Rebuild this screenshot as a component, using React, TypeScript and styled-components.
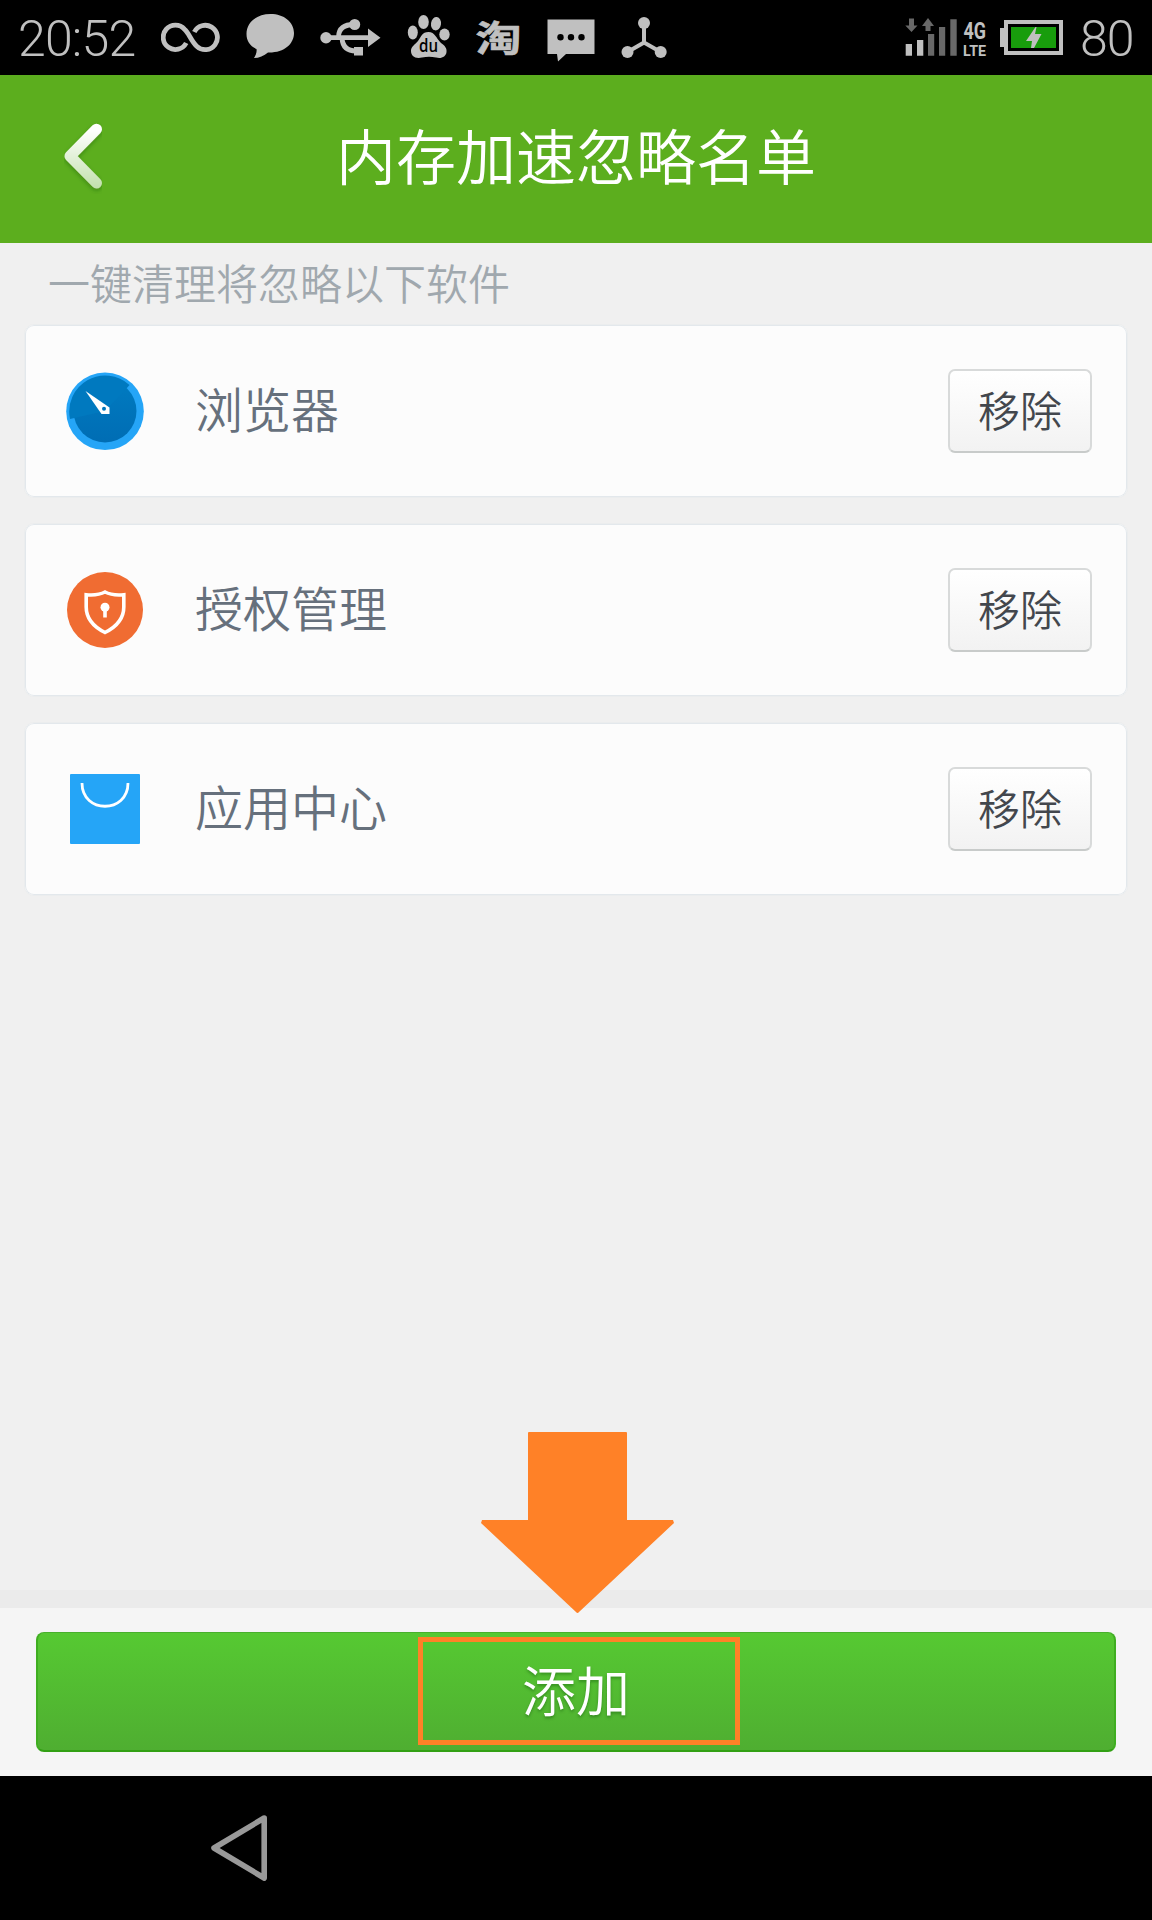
import React from 'react';
import styled, { createGlobalStyle } from 'styled-components';

const GlobalStyle = createGlobalStyle`
  * { box-sizing: border-box; }
  body { margin: 0; background: #f0f0f0; }
`;

const cjk = `Roboto, 'Noto Sans CJK SC', sans-serif`;

const Screen = styled.div`
  width: 1152px;
  height: 1920px;
  display: flex;
  flex-direction: column;
  background: #f0f0f0;
  font-family: ${cjk};
  font-weight: 350;
  overflow: hidden;
`;

const StatusBar = styled.div`
  height: 75px;
  flex: none;
  display: flex;
  background: #000;
  color: #c0c0c0;
  font-weight: 300;
`;

const Clock = styled.div`
  width: 161px;
  padding-left: 18px;
  font-size: 50px;
  letter-spacing: -0.8px;
  line-height: 79px;
  white-space: nowrap;
`;

const Charge = styled.div`
  margin-left: 17px;
  font-size: 50px;
  letter-spacing: -1px;
  line-height: 79px;
`;

const StatusIcon = styled.svg<{ $gap?: number }>`
  flex: none;
  display: block;
  height: 75px;
  margin-left: ${(p) => p.$gap ?? 0}px;
  fill: #c0c0c0;
`;

const Header = styled.header`
  height: 168px;
  flex: none;
  display: grid;
  grid-template-columns: 160px 1fr 160px;
  align-items: center;
  background: #5cae1e;
`;

const BackButton = styled.button`
  height: 168px;
  padding: 0 0 0 56px;
  border: 0;
  background: none;
  display: flex;
  align-items: center;
`;

const Title = styled.h1`
  margin: 0;
  padding-top: 2px;
  text-align: center;
  color: #fff;
  font-size: 60px;
  font-weight: 350;
  line-height: 166px;
`;

const Content = styled.main`
  flex: 1;
  padding: 0 24px;
`;

const Hint = styled.p`
  margin: 0;
  height: 81px;
  padding-left: 24px;
  color: #a0a8ae;
  font-size: 42px;
  line-height: 86px;
`;

const List = styled.div`
  display: flex;
  flex-direction: column;
  gap: 25px;
`;

const Card = styled.div`
  height: 174px;
  display: flex;
  align-items: center;
  padding: 0 35px 0 40px;
  border: 1px solid #ebedee;
  border-radius: 10px;
  background: #fcfcfc;
  box-shadow: inset 0 0 0 1px #e3e8ec;
`;

const AppIcon = styled.svg`
  width: 80px;
  height: 80px;
  flex: none;
`;

const AppName = styled.span`
  flex: 1;
  margin-left: 50px;
  padding-top: 1px;
  color: #66707c;
  font-size: 48px;
  line-height: 72px;
`;

const RemoveButton = styled.button`
  width: 144px;
  height: 84px;
  padding: 3px 0 0;
  border: 2px solid #d8dada;
  border-bottom-color: #c8cbca;
  border-radius: 7px;
  background: linear-gradient(#fff, #f2f2f2);
  color: #43474d;
  font-family: ${cjk};
  font-weight: 350;
  font-size: 42px;
  line-height: 77px;
`;

const Footer = styled.footer`
  position: relative;
  height: 186px;
  flex: none;
  padding: 24px 36px;
  border-top: 18px solid #ebebeb;
  background: #f5f5f5;
`;

const AddButton = styled.button`
  display: block;
  width: 1080px;
  height: 120px;
  padding: 4px 0 0;
  border: 2px solid #3fae20;
  border-top: 1px solid #48b02c;
  border-bottom-color: #32a014;
  border-radius: 8px;
  background: linear-gradient(#56c932, #4fae31);
  color: #fff;
  font-family: ${cjk};
  font-weight: 350;
  font-size: 54px;
  line-height: 113px;
  text-shadow: 0 2px 3px rgba(0, 60, 0, 0.35);
`;

const Highlight = styled.div`
  position: absolute;
  left: 418px;
  top: 29px;
  width: 322px;
  height: 108px;
  border: 5px solid #ff8127;
`;

const Arrow = styled.svg`
  position: absolute;
  left: 481px;
  top: -176px;
`;

const NavBar = styled.nav`
  height: 144px;
  flex: none;
  display: flex;
  align-items: center;
  padding-left: 208px;
  background: #000;
`;

function StatusIcons() {
  return (
    <>
      <StatusIcon width="60" viewBox="161 0 60 75">
        <path
          d="M186.200 43 A12.200 12.200 0 1 1 184.600 29.300 C189 33 191 41 197 46.500 A12.200 12.200 0 1 0 194.300 32"
          fill="none"
          stroke="#c0c0c0"
          strokeWidth="4.800"
        />
      </StatusIcon>
      <StatusIcon width="50" $gap={24} viewBox="245 0 50 75">
        <path d="M270.500 14 C284 14 294 22 294 33 C294 44 284 53 268 52.500 C264 56 259 58 254 58 C256 55 257 52 256.500 49 C250 46 246.500 41 246.500 34 C246.500 22 257 14 270.500 14Z" />
      </StatusIcon>
      <StatusIcon width="62" $gap={25} viewBox="320 0 62 75">
        <circle cx="326" cy="37.700" r="5.700" />
        <path d="M368 28.500 L380.500 37.700 L368 47Z M354 47h9v8.500h-9z" />
        <circle cx="354.700" cy="24.500" r="5.500" />
        <path
          d="M326 37.700H369 M338.500 37C338.500 28 344 24.500 354 24.500 M342 38C342.500 47 347 51 356 51"
          fill="none"
          stroke="#c0c0c0"
          strokeWidth="4.800"
        />
      </StatusIcon>
      <StatusIcon width="46" $gap={24} viewBox="406 0 46 75">
        <ellipse cx="412.800" cy="32.500" rx="5" ry="7" />
        <ellipse cx="423.500" cy="22" rx="5.300" ry="7" />
        <ellipse cx="436" cy="23.700" rx="5" ry="6.700" transform="rotate(8 436 23.700)" />
        <ellipse cx="444.500" cy="34.500" rx="5.200" ry="6" />
        <path d="M428.500 32C435 32 436 38 441 43C445 46 447 48 446.500 52C446 57 441 59 436 57.500C431 56.500 427 56.500 422 57.500C415 59 411 56 411 51C411 46 415 45 418 41C421 37 422 32 428.500 32Z" />
        <text
          x="419"
          y="52"
          fontFamily="Open Sans, Noto Sans, sans-serif"
          fontWeight="600"
          fontSize="17.500"
          textLength="19"
          lengthAdjust="spacingAndGlyphs"
          fill="#000"
        >
          du
        </text>
      </StatusIcon>
      <StatusIcon width="48" $gap={24} viewBox="476 0 48 75">
        <text
          x="475.500"
          y="51.500"
          fontFamily="Noto Sans CJK SC, sans-serif"
          fontWeight="700"
          fontSize="36"
          textLength="46"
          lengthAdjust="spacingAndGlyphs"
          stroke="#c0c0c0"
          strokeWidth="0.600"
          strokeLinejoin="round"
        >
          淘
        </text>
      </StatusIcon>
      <StatusIcon width="50" $gap={22} viewBox="546 0 50 75">
        <path d="M547.500 19.500H594.500V54H566L558 61.500L557 54H547.500Z" />
        <g fill="#000">
          <circle cx="560.500" cy="37.200" r="3.200" />
          <circle cx="571" cy="37.200" r="3.200" />
          <circle cx="581.500" cy="37.200" r="3.200" />
        </g>
      </StatusIcon>
      <StatusIcon width="48" $gap={24} viewBox="620 0 48 75">
        <circle cx="644" cy="23" r="6" />
        <circle cx="627.500" cy="52" r="6" />
        <circle cx="660.700" cy="52" r="6" />
        <path d="M644 23V42.500L627.500 52M644 42.500L660.700 52" fill="none" stroke="#c0c0c0" strokeWidth="4" />
      </StatusIcon>
      <StatusIcon width="90" $gap={236} viewBox="904 0 90 75">
        <path d="M905.700 44h6.300v11.700h-6.300zM917 40h6.300v15.700H917z" />
        <path
          d="M928 34h6.200v21.700H928zM939 27h6.200v28.700H939zM950.300 19.300h6.400v36.400h-6.400zM909 18.500h5v7h3.500L911.500 32L905.300 25.500H909zM925.500 31h5v-5h3.500L928 18L922 26h3.500z"
          fill="#686868"
        />
        <g fontFamily="Roboto, sans-serif" fontWeight="700">
          <text x="963.500" y="39" fontSize="23" textLength="22.500" lengthAdjust="spacingAndGlyphs">4G</text>
          <text x="963" y="55.700" fontSize="15.500" textLength="23" lengthAdjust="spacingAndGlyphs">LTE</text>
        </g>
      </StatusIcon>
      <StatusIcon width="63" $gap={6} viewBox="1000 0 63 75">
        <path d="M1000 28h4v-8h59v35h-59v-8h-4zM1008 24v27h51v-27z" fillRule="evenodd" />
        <path d="M1011 27h45v21h-45z" fill="#189d0c" />
        <path d="M1035.500 27L1026 41H1032L1031 48H1034L1041.500 34H1035L1036.500 27Z" />
      </StatusIcon>
    </>
  );
}

function BrowserIcon() {
  return (
    <AppIcon viewBox="0 0 80 80">
      <defs>
        <linearGradient id="dial" x2="0" y2="1">
          <stop stopColor="#007bc1" />
          <stop offset="1" stopColor="#006db4" />
        </linearGradient>
      </defs>
      <circle cx="40" cy="40.300" r="38.800" fill="#25a5f7" />
      <circle cx="40" cy="40" r="31.500" fill="url(#dial)" />
      <path d="M40 40L5 48A36 36 0 0 1 64.500 14L61 18Z" fill="#0079bf" />
      <path d="M20.500 20L44.500 36.500V43H36.500Z" fill="#fff" />
      <circle cx="39" cy="37.700" r="2" fill="#0075bb" />
    </AppIcon>
  );
}

function ShieldIcon() {
  return (
    <AppIcon viewBox="0 0 80 80">
      <circle cx="40" cy="40" r="38" fill="#f06c32" />
      <path
        d="M40 22C34 25.200 28 25.300 21.200 24.700V37C21.200 49 29 57 40 62.500C51 57 58.800 49 58.800 37V24.700C52 25.300 46 25.200 40 22Z"
        fill="none"
        stroke="#fff"
        strokeWidth="3.600"
      />
      <circle cx="40" cy="37.300" r="4.500" fill="#fff" />
      <path d="M38.200 38h3.600v9.500h-3.600z" fill="#fff" />
    </AppIcon>
  );
}

function BagIcon() {
  return (
    <AppIcon viewBox="0 0 80 80">
      <rect x="5" y="5" width="70" height="70" rx="1" fill="#25a5f7" />
      <path d="M17 14C17 45 63 45 63 14" fill="none" stroke="#fff" strokeWidth="2.800" />
    </AppIcon>
  );
}

const apps = [
  { name: '浏览器', Icon: BrowserIcon },
  { name: '授权管理', Icon: ShieldIcon },
  { name: '应用中心', Icon: BagIcon },
];

export default function App() {
  return (
    <Screen>
      <GlobalStyle />
      <StatusBar>
        <Clock>20:52</Clock>
        <StatusIcons />
        <Charge>80</Charge>
      </StatusBar>
      <Header>
        <BackButton aria-label="返回">
          <svg width="56" height="84" viewBox="56 117 56 84">
            <defs>
              <linearGradient id="chev" gradientUnits="userSpaceOnUse" x1="0" y1="123" x2="0" y2="188">
                <stop offset="0.100" stopColor="#fff" />
                <stop offset="1" stopColor="#c2e0ac" />
              </linearGradient>
              <filter id="chevShadow" x="-20%" y="-20%" width="140%" height="140%">
                <feDropShadow dx="0" dy="2" stdDeviation="2" floodColor="#1e5000" floodOpacity="0.400" />
              </filter>
            </defs>
            <path
              d="M96.500 129.200L70 156.200L96.500 183"
              fill="none"
              stroke="url(#chev)"
              strokeWidth="11"
              strokeLinecap="round"
              strokeLinejoin="round"
              filter="url(#chevShadow)"
            />
          </svg>
        </BackButton>
        <Title>内存加速忽略名单</Title>
      </Header>
      <Content>
        <Hint>一键清理将忽略以下软件</Hint>
        <List>
          {apps.map(({ name, Icon }) => (
            <Card key={name}>
              <Icon />
              <AppName>{name}</AppName>
              <RemoveButton>移除</RemoveButton>
            </Card>
          ))}
        </List>
      </Content>
      <Footer>
        <AddButton>添加</AddButton>
        <Highlight />
        <Arrow width="193" height="181" viewBox="0 0 193 181">
          <path d="M48 0H145Q146 0 146 1V88H192L193 91L98 180Q96.500 182 95 180L0 91L1 88H47V1Q47 0 48 0Z" fill="#ff8127" />
        </Arrow>
      </Footer>
      <NavBar>
        <svg width="62" height="72" viewBox="208 1812 62 72">
          <path d="M264.200 1818L214 1848L264.200 1878Z" fill="none" stroke="#999" strokeWidth="5.600" strokeLinejoin="round" />
        </svg>
      </NavBar>
    </Screen>
  );
}
